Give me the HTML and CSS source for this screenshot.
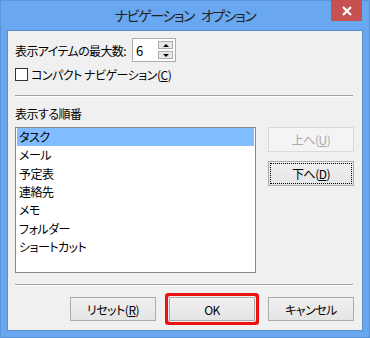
FILE: index.html
```html
<!DOCTYPE html>
<html lang="ja">
<head>
<meta charset="utf-8">
<link rel="stylesheet" href="styles.css">
</head>
<body>
<div class="window">
  <div class="titlebar">
    <span></span>
    <div class="title">ナビゲーション オプション</div>
    <div class="close">
      <svg width="10" height="10" viewBox="0 0 10 10"><path d="M1 1 L9 9 M9 1 L1 9" stroke="#fff" stroke-width="2.2" fill="none"/></svg>
    </div>
  </div>
  <div class="content">
    <div class="row1">
      <span class="lbl1">表示アイテムの最大数:</span>
      <div class="spin">
        <span class="val">6</span>
        <div class="spinbtns">
          <div class="sb"><span class="tri-up"></span></div>
          <div class="sb"><span class="tri-down"></span></div>
        </div>
      </div>
    </div>
    <div class="row2">
      <span class="cb"></span>
      <span>コンパクト ナビゲーション(<u>C</u>)</span>
    </div>
    <div class="sep"></div>
    <div class="lbl2">表示する順番</div>
    <div class="listarea">
      <div class="list">
        <div class="item sel">タスク</div>
        <div class="item">メール</div>
        <div class="item">予定表</div>
        <div class="item">連絡先</div>
        <div class="item">メモ</div>
        <div class="item">フォルダー</div>
        <div class="item">ショートカット</div>
      </div>
      <div class="side">
        <button class="btn dis">上へ(<u>U</u>)</button>
        <button class="btn focus">下へ(<u>D</u>)</button>
      </div>
    </div>
    <div class="sep sep2"></div>
    <div class="bottom">
      <button class="btn bb">リセット(<u>R</u>)</button>
      <button class="btn bb ok">OK</button>
      <button class="btn bb">キャンセル</button>
    </div>
  </div>
</div>
</body>
</html>
```

FILE: styles.css
```css
* { box-sizing: border-box; }
body {
  margin: 0;
  font-family: "Noto Sans CJK JP", "Noto Sans", sans-serif;
  font-size: 12px;
  font-feature-settings: "palt";
  letter-spacing: -0.5px;
  color: #000;
}
.window {
  width: 370px;
  height: 338px;
  background: #69a8f0;
  border: 1px solid #5a95dc;
  display: flex;
  flex-direction: column;
}
.titlebar {
  height: 29px;
  display: grid;
  grid-template-columns: 1fr auto 1fr;
  align-items: start;
}
.title {
  font-size: 14px;
  letter-spacing: -1.4px;
  word-spacing: 5px;
  line-height: 29px;
  color: #222;
  white-space: nowrap;
}
.close {
  justify-self: end;
  width: 31px;
  height: 21px;
  margin-top: -1px;
  margin-right: 7px;
  background: #c75050;
  display: flex;
  align-items: center;
  justify-content: center;
}
.content {
  flex: 1;
  margin: 0 6px 6px;
  border: 1px solid #5b8fcc;
  background: #f0f0f0;
  padding: 7px 8px 0 7px;
}
.row1 {
  display: flex;
  align-items: center;
  height: 24px;
}
.lbl1 {
  width: 117px;
  flex-shrink: 0;
  white-space: nowrap;
  letter-spacing: -0.6px;
}
.spin {
  width: 44px;
  height: 24px;
  border: 1px solid #acacac;
  background: #fff;
  display: flex;
  align-items: center;
  justify-content: space-between;
  padding: 0 2px 0 3px;
}
.val { font-size: 13px; }
.spinbtns {
  display: flex;
  flex-direction: column;
  gap: 2px;
}
.sb {
  width: 15px;
  height: 8px;
  border: 1px solid #acacac;
  background: #e8e8e8;
  display: flex;
  align-items: center;
  justify-content: center;
}
.tri-up {
  width: 0; height: 0;
  border-left: 3px solid transparent;
  border-right: 3px solid transparent;
  border-bottom: 3px solid #000;
}
.tri-down {
  width: 0; height: 0;
  border-left: 3px solid transparent;
  border-right: 3px solid transparent;
  border-top: 3px solid #000;
}
.row2 {
  margin-top: 6px;
  display: flex;
  align-items: center;
  gap: 3px;
  height: 13px;
  white-space: nowrap;
}
.cb {
  width: 13px;
  height: 13px;
  border: 1px solid #333;
  background: #fff;
}
.sep {
  margin-top: 14px;
  margin-right: 1px;
  height: 2px;
  border-top: 1px solid #a0a0a0;
  border-bottom: 1px solid #fff;
}
.sep2 { margin-top: 11px; }
.lbl2 {
  margin-top: 8px;
  line-height: 18px;
}
.listarea {
  margin-top: 4px;
  display: flex;
  gap: 12px;
}
.list {
  width: 241px;
  height: 146px;
  border: 1px solid #828790;
  background: #fff;
  padding: 0 1px;
}
.item {
  height: 18.33px;
  line-height: 18px;
  padding-left: 2px;
}
.item.sel { background: #80bcff; }
.side {
  display: flex;
  flex-direction: column;
  gap: 9px;
}
.btn {
  width: 86px;
  height: 25px;
  padding: 0;
  font-family: inherit;
  font-size: 12px;
  font-feature-settings: "palt";
  letter-spacing: -0.5px;
  color: #000;
  border: 1px solid #acacac;
  background: linear-gradient(#f0f0f0, #e5e5e5);
}
.btn.dis {
  color: #a8a8a8;
  border-color: #d9d9d9;
  background: #f4f4f4;
}
.btn.focus {
  outline: 1px dotted #000;
  outline-offset: -3px;
}
.bottom {
  margin-top: 11px;
  display: flex;
  justify-content: flex-end;
  gap: 13px;
}
.btn.bb { height: 24px; }
.btn.ok {
  border-radius: 1px;
  box-shadow: 0 0 0 1px #f0f0f0, 0 0 0 4px #ee1111;
}
```
